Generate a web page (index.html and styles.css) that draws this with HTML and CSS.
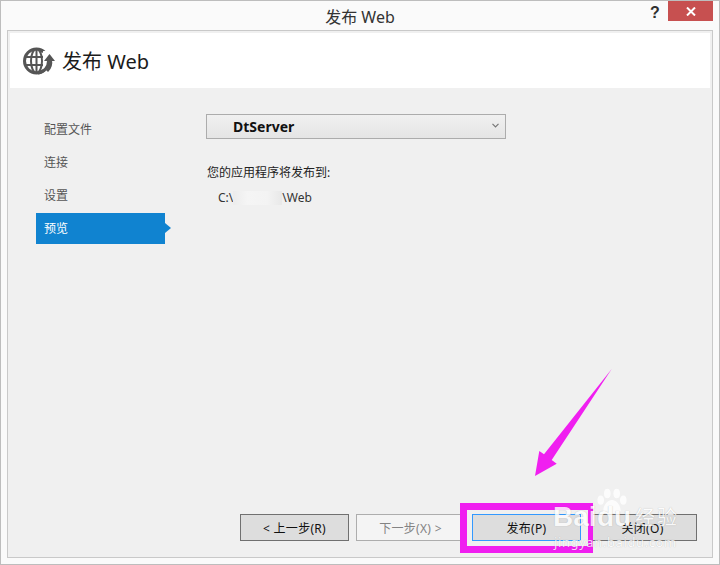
FILE: index.html
```html
<!DOCTYPE html>
<html lang="zh">
<head>
<meta charset="utf-8">
<title>发布 Web</title>
<link rel="stylesheet" href="styles.css">
</head>
<body>
<div class="window">
  <div class="titlebar">
    <span class="title">发布 Web</span>
    <span class="help">?</span>
    <span class="close"><svg width="10" height="9" viewBox="0 0 10 9"><path d="M1 .5 9 8.500M9 .5 1 8.500" stroke="#fff" stroke-width="2" fill="none"/></svg></span>
  </div>
  <div class="panel">
    <header class="head">
      <svg class="globe" width="32" height="28" viewBox="0 0 32 28" fill="none">
        <circle cx="13.500" cy="14" r="12" stroke="#555" stroke-width="3"/>
        <ellipse cx="13.500" cy="14" rx="5.500" ry="12" stroke="#555" stroke-width="2"/>
        <path d="M2 10H25M2 18H25M13.500 2V26" stroke="#555" stroke-width="2"/>
        <path d="M20 4H32V24H20Z" fill="#fff"/>
        <path d="M17.500 3.500A12 12 0 0 1 20 4.500M25.500 14A12 12 0 0 1 15 26" stroke="#555" stroke-width="3"/>
        <path d="M21 14 26.500 7 32 14Z" fill="#555"/>
        <path d="M27.300 12C28.500 17 27 21 24 24" stroke="#555" stroke-width="3"/>
      </svg>
      <h1 class="heading">发布 Web</h1>
    </header>
    <div class="body">
      <nav class="side">
        <div class="item">配置文件</div>
        <div class="item">连接</div>
        <div class="item">设置</div>
        <div class="item active">预览</div>
      </nav>
      <main class="content">
        <div class="select">
          <span class="select-text">DtServer</span>
          <svg class="chev" width="7" height="5" viewBox="0 0 7 5"><path d="M.5 .8 3.500 3.800 6.500 .8" stroke="#777" stroke-width="1.200" fill="none"/></svg>
        </div>
        <p class="label">您的应用程序将发布到:</p>
        <p class="path">C:\<span class="mask"></span>\Web</p>
      </main>
    </div>
    <footer class="foot">
      <button class="btn">&lt; 上一步(R)</button>
      <button class="btn off">下一步(X) &gt;</button>
      <button class="btn primary">发布(P)</button>
      <button class="btn">关闭(O)</button>
    </footer>
  </div>

  <div class="mark"></div>
  <svg class="arrow" width="90" height="120" viewBox="0 0 90 120"><polygon points="82.700,1 22.700,92 27.700,95.700 6,108 10.300,83 15,86.300" fill="#f01ff0"/></svg>
  <div class="wm">
    <svg class="paw" width="32" height="28" viewBox="0 0 34 28" fill="#fff"><ellipse cx="5" cy="12" rx="3.500" ry="5"/><ellipse cx="12" cy="5" rx="3.500" ry="5"/><ellipse cx="22" cy="5" rx="3.500" ry="5"/><ellipse cx="29" cy="12" rx="3.500" ry="5"/><path d="M17 12C23 12 27 20 26 24 25 28 20 26 17 26S9 28 8 24C7 20 11 12 17 12Z"/></svg>
    <span class="wm-logo">Bai</span><span class="wm-logo wm-du">du</span><span class="wm-cn">经验</span>
    <span class="wm-url">jingyan.baidu.com</span>
  </div>
</div>
</body>
</html>
```

FILE: styles.css
```css
html, body { margin: 0; padding: 0; }
body {
  width: 720px;
  height: 565px;
  overflow: hidden;
  font-family: "Noto Sans", "Noto Sans CJK SC", sans-serif;
  font-size: 12px;
  color: #1e1e1e;
}
.window {
  position: relative;
  box-sizing: border-box;
  width: 720px;
  height: 565px;
  background: #fafafa;
  border: 1px solid #bdbdbd;
  display: flex;
  flex-direction: column;
  padding: 0 6px 6px;
}
.titlebar {
  height: 29px;
  flex: none;
  display: flex;
  justify-content: center;
  align-items: center;
  position: relative;
}
.title { font-size: 16px; color: #333; }
.help {
  position: absolute;
  left: 643px;
  top: 2px;
  font: bold 16px/20px "Liberation Sans", sans-serif;
  color: #2f2f2f;
}
.close {
  position: absolute;
  left: 661px;
  top: 0;
  width: 45px;
  height: 20px;
  background: #c75050;
  display: flex;
  align-items: center;
  justify-content: center;
}
.panel {
  flex: 1;
  box-sizing: border-box;
  border: 1px solid #c9c9c9;
  background: #f0f0f0;
  display: flex;
  flex-direction: column;
  padding: 2px;
}
.head {
  flex: none;
  height: 55px;
  background: #fff;
  display: flex;
  align-items: center;
  padding-left: 13px;
  gap: 7px;
}
.globe { flex: none; }
.heading {
  margin: 0;
  font-size: 20px;
  font-weight: 400;
  color: #1b1b1b;
}
.body { flex: 1; display: flex; min-height: 0; }
.side {
  width: 129px;
  margin: 26px 0 0 26px;
  display: flex;
  flex-direction: column;
  gap: 2px;
}
.item {
  height: 31px;
  line-height: 31px;
  padding-left: 8px;
  color: #555;
  position: relative;
}
.active { background: #1083d0; color: #fff; }
.active::after {
  content: "";
  position: absolute;
  left: 100%;
  top: 10px;
  border-left: 6px solid #1083d0;
  border-top: 5px solid transparent;
  border-bottom: 5px solid transparent;
}
.content { margin: 26px 0 0 41px; }
.select {
  box-sizing: border-box;
  width: 300px;
  height: 25px;
  border: 1px solid #acacac;
  background: linear-gradient(#f0f0f0, #e5e5e5);
  display: flex;
  align-items: center;
  justify-content: space-between;
  padding: 0 6px 0 26px;
}
.select-text { font-size: 14px; font-weight: 700; color: #111; }
.chev { margin-bottom: 3px; }
.label { margin: 25px 0 0 1px; line-height: 18px; color: #222; }
.path {
  margin: 7px 0 0 12px;
  line-height: 18px;
  display: flex;
  align-items: center;
  color: #333;
}
.mask {
  width: 49px;
  height: 14px;
  background: linear-gradient(90deg, #ececec, #f5f5f5 30%, #f3f3f3 70%, #e8e8e8);
}
.foot {
  flex: none;
  height: 41px;
  display: flex;
  justify-content: flex-end;
  gap: 7px;
  padding-right: 13px;
}
.btn {
  box-sizing: border-box;
  width: 109px;
  height: 27px;
  padding: 0;
  border: 1px solid #707070;
  background: #dddddd;
  font: 12px "Noto Sans", "Noto Sans CJK SC", sans-serif;
  letter-spacing: .3px;
  color: #111;
}
.off { background: #f4f4f4; border-color: #adadad; color: #838383; }
.primary { border-color: #3399ff; }
.mark {
  position: absolute;
  left: 459px;
  top: 502px;
  box-sizing: border-box;
  width: 133px;
  height: 50px;
  border: 7px solid #f01ff0;
  border-right-width: 5px;
}
.arrow { position: absolute; left: 528px; top: 367px; }
.wm {
  position: absolute;
  left: 552px;
  top: 486px;
  width: 135px;
  height: 62px;
  color: #fff;
  opacity: .8;
  text-shadow: 0 0 1px rgba(0, 0, 0, .3);
  pointer-events: none;
}
.paw { position: absolute; left: 43px; top: 1px; }
.wm-logo {
  position: absolute;
  left: 0;
  top: 14px;
  font: 700 28px/32px "Liberation Sans", sans-serif;
}
.wm-du { left: 44px; }
.wm-cn { position: absolute; left: 82px; top: 19px; font-size: 20px; line-height: 24px; letter-spacing: 2px; white-space: nowrap; }
.wm-url { position: absolute; left: 1px; top: 47px; font-size: 13px; line-height: 16px; letter-spacing: .6px; white-space: nowrap; }
```
